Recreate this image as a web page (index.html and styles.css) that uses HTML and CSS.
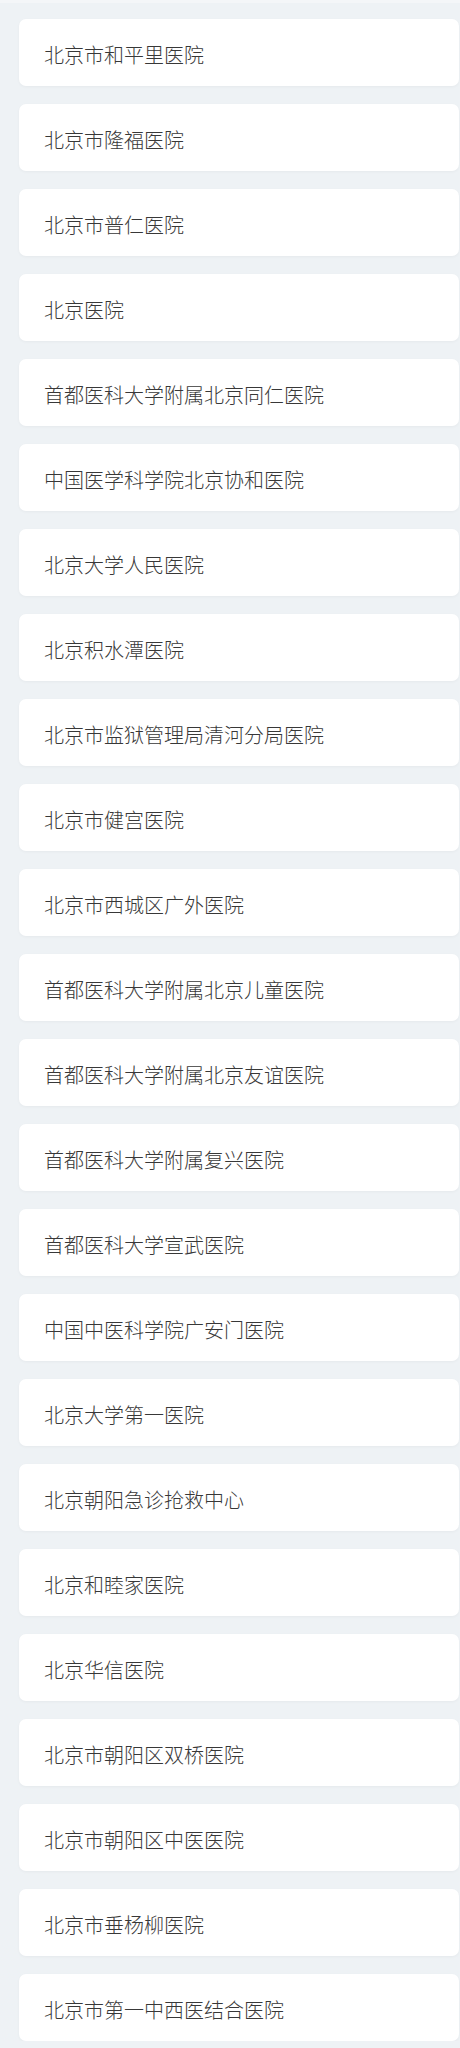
FILE: index.html
```html
<!DOCTYPE html>
<html lang="zh-CN">
<head>
<meta charset="utf-8">
<title>医院列表</title>
<link rel="stylesheet" href="styles.css">
</head>
<body>
<div class="topbar"></div>
<ul class="list">
  <li class="card">北京市和平里医院</li>
  <li class="card">北京市隆福医院</li>
  <li class="card">北京市普仁医院</li>
  <li class="card">北京医院</li>
  <li class="card">首都医科大学附属北京同仁医院</li>
  <li class="card">中国医学科学院北京协和医院</li>
  <li class="card">北京大学人民医院</li>
  <li class="card">北京积水潭医院</li>
  <li class="card">北京市监狱管理局清河分局医院</li>
  <li class="card">北京市健宫医院</li>
  <li class="card">北京市西城区广外医院</li>
  <li class="card">首都医科大学附属北京儿童医院</li>
  <li class="card">首都医科大学附属北京友谊医院</li>
  <li class="card">首都医科大学附属复兴医院</li>
  <li class="card">首都医科大学宣武医院</li>
  <li class="card">中国中医科学院广安门医院</li>
  <li class="card">北京大学第一医院</li>
  <li class="card">北京朝阳急诊抢救中心</li>
  <li class="card">北京和睦家医院</li>
  <li class="card">北京华信医院</li>
  <li class="card">北京市朝阳区双桥医院</li>
  <li class="card">北京市朝阳区中医医院</li>
  <li class="card">北京市垂杨柳医院</li>
  <li class="card">北京市第一中西医结合医院</li>
</ul>
</body>
</html>
```

FILE: styles.css
```css
html, body {
  margin: 0;
  padding: 0;
  background: #eef2f5;
  font-family: "Microsoft YaHei", "Noto Sans CJK SC", "Noto Sans", sans-serif;
}
.topbar {
  height: 3px;
  background: #f4f6f8;
}
.list {
  list-style: none;
  margin: 0;
  padding: 16px 0 0 19px;
  display: flex;
  flex-direction: column;
  gap: 18px;
}
.card {
  box-sizing: border-box;
  width: 440px;
  height: 67px;
  background: #ffffff;
  border-radius: 7px;
  box-shadow: 0 1px 3px rgba(0, 0, 0, 0.04);
  padding: 4px 25px 0;
  display: flex;
  align-items: center;
  font-size: 20px;
  font-weight: 300;
  color: #383838;
}
```
